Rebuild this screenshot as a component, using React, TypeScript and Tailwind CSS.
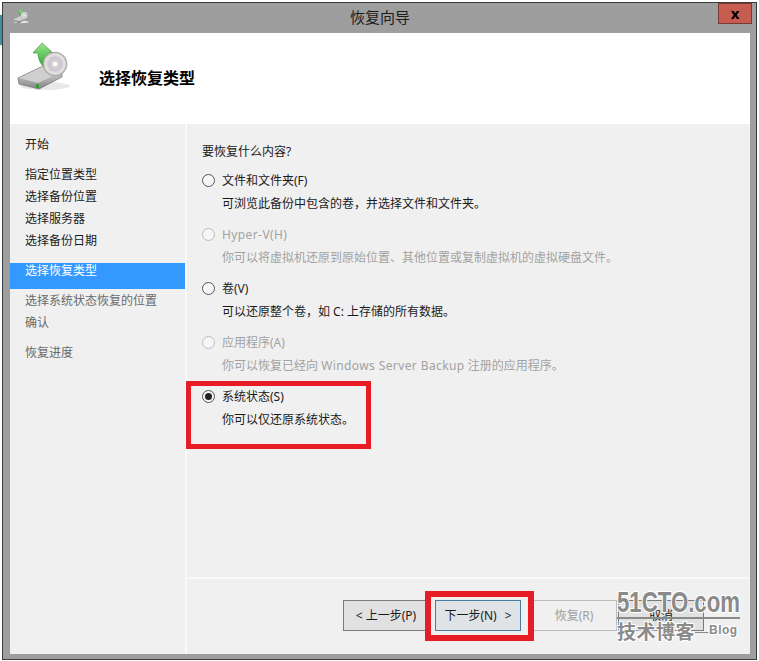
import React from "react";

const FONT = "font-['Noto_Sans','Noto_Sans_CJK_SC',sans-serif]";

// 向导图标: 硬盘 + 光盘 + 绿色箭头
function WizardIcon({ size, id }: { size: number; id: string }) {
  return (
    <svg width={size} height={size} viewBox="0 0 56 56">
      <defs>
        <linearGradient id={`${id}-disk`} x1="0" y1="0" x2="0" y2="1">
          <stop offset="0" stopColor="#e6e6e6" />
          <stop offset="1" stopColor="#858585" />
        </linearGradient>
        <linearGradient id={`${id}-arrow`} x1="0" y1="0" x2="0" y2="1">
          <stop offset="0" stopColor="#9be886" />
          <stop offset="1" stopColor="#1c9a2a" />
        </linearGradient>
        <radialGradient id={`${id}-cd`}>
          <stop offset="0" stopColor="#f6f6f6" />
          <stop offset="0.5" stopColor="#c8c3cf" />
          <stop offset="0.8" stopColor="#e8e4df" />
          <stop offset="1" stopColor="#b0b0b0" />
        </radialGradient>
      </defs>
      <ellipse cx="30" cy="46" rx="25" ry="4" fill="#e8e8e8" />
      <path d="M3 38 L28 26 L47 31 L47 37 L24 49 L4 44 Z" fill={`url(#${id}-disk)`} stroke="#6e6e6e" strokeWidth="0.7" />
      <path d="M4 38 L28 27 L46 32 L23 43 Z" fill="#cfcfcf" />
      <rect x="21" y="44" width="3" height="4" fill="#2f9e36" />
      <path
        d="M27 3 L38 13 L33 13 C32 18 33 24 38 31 C29 30 23 22 23 13 L18 13 Z"
        fill={`url(#${id}-arrow)`}
        stroke="#2a8a30"
        strokeWidth="0.6"
      />
      <circle cx="40" cy="24" r="12" fill={`url(#${id}-cd)`} stroke="#9a9a9a" strokeWidth="0.6" />
      <circle cx="40" cy="24" r="3" fill="#fff" stroke="#a8a8a8" strokeWidth="0.6" />
    </svg>
  );
}

function StepItem({ label, tone }: { label: string; tone: "done" | "todo" }) {
  return (
    <div className={`h-[22px] pl-[15px] leading-[22px] ${tone === "done" ? "text-[#1a1a1a]" : "text-[#6a6a6a]"}`}>
      {label}
    </div>
  );
}

function RadioOption({
  label,
  desc,
  disabled,
  checked,
}: {
  label: React.ReactNode;
  desc: React.ReactNode;
  disabled?: boolean;
  checked?: boolean;
}) {
  return (
    <div className="h-[54px]">
      <div className="flex h-[23px] items-center">
        <span
          className={`flex h-[13px] w-[13px] items-center justify-center rounded-full border bg-[#f6f6f6] ${
            disabled ? "border-[#bdbdbd]" : "border-[#555]"
          }`}
        >
          {checked && <span className="h-[7px] w-[7px] rounded-full bg-[#222]" />}
        </span>
        <span className={`ml-[7px] ${disabled ? "text-[#a2a2a2]" : "text-[#1a1a1a]"}`}>{label}</span>
      </div>
      <div className={`h-[23px] pl-[20px] leading-[24px] ${disabled ? "text-[#a2a2a2]" : "text-[#1a1a1a]"}`}>{desc}</div>
    </div>
  );
}

function WizardButton({
  children,
  variant,
}: {
  children: React.ReactNode;
  variant: "normal" | "focus" | "disabled";
}) {
  const styles = {
    normal: "border-[#7a7a7a] bg-[#e1e1e1] text-[#1a1a1a]",
    focus: "border-[#4a7ba0] bg-[#dfe3e6] text-[#1a1a1a]",
    disabled: "border-[#bcbcbc] bg-[#f0f0f0] text-[#9f9f9f]",
  };
  return (
    <div className={`flex h-[31px] w-[86px] items-center justify-center border ${styles[variant]}`}>{children}</div>
  );
}

export default function App() {
  return (
    <div className={`relative h-[661px] w-[759px] overflow-hidden bg-white pl-[2px] pr-[2px] pt-[2px] text-[12px] ${FONT}`}>
      <div className="absolute left-0 top-[15px] h-[30px] w-[2px] bg-[#3f8f9f]" />
      <div className="flex h-[658px] w-[755px] flex-col border border-[#3a3a3a] bg-[#9e9e9e] pb-[5px] pl-[7px] pr-[6px]">
        {/* title bar */}
        <div className="relative flex h-[30px] shrink-0 items-center justify-center pb-[2px]">
          <div className="absolute left-[2px] top-[5px]">
            <WizardIcon size={17} id="small" />
          </div>
          <span className="text-[15px] text-[#1c1c1c]">恢复向导</span>
          <div className="absolute right-[-2px] top-0 flex h-[21px] w-[34px] items-center justify-center border border-[#7a3b33] bg-[#c75d50] text-[15px] font-bold leading-none text-black">
            x
          </div>
        </div>

        {/* header */}
        <div className="flex h-[91px] shrink-0 items-center bg-white">
          <div className="ml-[5px] mt-[-21px]">
            <WizardIcon size={56} id="large" />
          </div>
          <h1 className="ml-[28px] mt-[-2px] text-[16px] font-semibold text-black">选择恢复类型</h1>
        </div>

        {/* body */}
        <div className="flex min-h-0 flex-1 bg-[#fafafa]">
          <div className="w-[175px] shrink-0 bg-[#f0f0f0] pt-[10px]">
            <StepItem label="开始" tone="done" />
            <div className="mt-[8px]">
              <StepItem label="指定位置类型" tone="done" />
              <StepItem label="选择备份位置" tone="done" />
              <StepItem label="选择服务器" tone="done" />
              <StepItem label="选择备份日期" tone="done" />
            </div>
            <div className="mt-[11px] h-[26px] bg-[#3399ff] pl-[15px] leading-[16px] text-white">选择恢复类型</div>
            <div className="pt-[1px]">
              <StepItem label="选择系统状态恢复的位置" tone="todo" />
              <StepItem label="确认" tone="todo" />
            </div>
            <div className="mt-[8px]">
              <StepItem label="恢复进度" tone="todo" />
            </div>
          </div>

          <div className="ml-[2px] flex min-w-0 flex-1 flex-col bg-[#f0f0f0]">
            <div className="h-[453px] shrink-0 pl-[15px] pt-[18px]">
              <div className="h-[20px] leading-[20px] text-[#1a1a1a]">要恢复什么内容?</div>
              <div className="mt-[7px] flex flex-col">
                <RadioOption label="文件和文件夹(F)" desc="可浏览此备份中包含的卷，并选择文件和文件夹。" />
                <RadioOption
                  label={<span className="tracking-[0.4px]">Hyper-V(H)</span>}
                  desc="你可以将虚拟机还原到原始位置、其他位置或复制虚拟机的虚拟硬盘文件。"
                  disabled
                />
                <RadioOption label="卷(V)" desc="可以还原整个卷，如 C: 上存储的所有数据。" />
                <RadioOption
                  label="应用程序(A)"
                  desc={
                    <>
                      你可以恢复已经向 <span className="tracking-[0.4px]">Windows Server Backup</span> 注册的应用程序。
                    </>
                  }
                  disabled
                />
                <RadioOption label="系统状态(S)" desc="你可以仅还原系统状态。" checked />
              </div>
            </div>
            <div className="flex flex-1 items-start gap-[6px] border-t-2 border-[#fafafa] pl-[156px] pt-[21px]">
              <WizardButton variant="normal">&lt; 上一步(P)</WizardButton>
              <WizardButton variant="focus">
                下一步(N)<span className="ml-[8px]">&gt;</span>
              </WizardButton>
              <div className="ml-[4px]">
                <WizardButton variant="disabled">恢复(R)</WizardButton>
              </div>
              <div className="ml-[-5px]">
                <WizardButton variant="normal">取消</WizardButton>
              </div>
            </div>
          </div>
        </div>
      </div>

      {/* 标注红框 */}
      <div className="absolute left-[186px] top-[381px] h-[68px] w-[185px] border-[5px] border-[#e81c24]" />
      <div className="absolute left-[425px] top-[591px] h-[50px] w-[109px] border-[6px] border-[#e81c24]" />

      {/* 水印 */}
      <div className="absolute left-[617px] top-[586px] w-[123px] [text-shadow:1px_1px_0_#fff,-1px_-1px_0_#fff,1px_-1px_0_#fff,-1px_1px_0_#fff]">
        <div className="h-[31px] origin-left scale-x-[0.74] whitespace-nowrap font-['Liberation_Sans'] text-[30px] font-bold leading-[31px] text-[#8a8a8a]">
          51CTO.com
        </div>
        <div className="h-[2px] w-full bg-[#8a8a8a]" />
        <div className="mt-[1px] flex items-center">
          <span className="text-[19px] font-bold leading-[25px] tracking-[0.5px] text-[#8a8a8a]">技术博客</span>
          <span className="h-[1px] w-[14px] bg-[#8a8a8a]" />
          <span className="mt-[-5px] font-['Liberation_Sans'] text-[12px] font-bold tracking-[0.5px] text-[#8a8a8a]">Blog</span>
        </div>
      </div>
    </div>
  );
}
